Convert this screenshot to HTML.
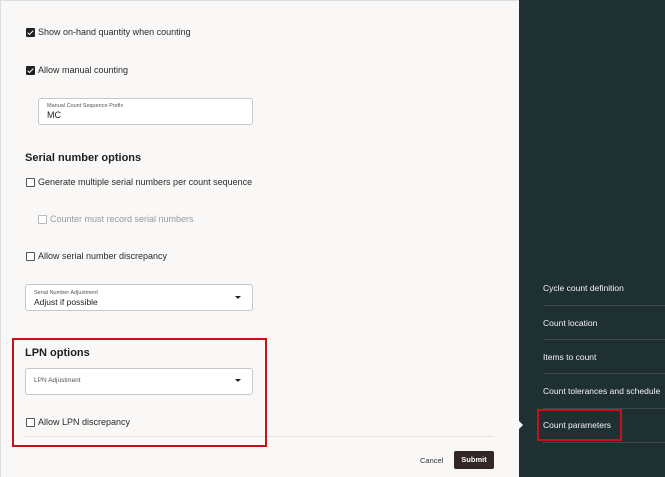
<!DOCTYPE html>
<html><head><style>
body{margin:0;width:665px;height:477px;overflow:hidden;background:#f9f8f6;font-family:"Liberation Sans",sans-serif;color:#222;position:relative}
.a{position:absolute}
.cb{position:absolute;box-sizing:border-box;width:9px;height:9px;border:1px solid #555;border-radius:1px;background:#fff}
.cb.on{background:#222;border-color:#222}
.cb.on:after{content:"";position:absolute;left:2px;top:0px;width:2px;height:5px;border:solid #fff;border-width:0 1.3px 1.3px 0;transform:rotate(45deg)}
.lbl{position:absolute;font-size:9px;color:#2a2a2a}
.field{position:absolute;background:#fff;border:1px solid #c9c7c3;border-radius:3px}
.h{position:absolute;font-size:11px;font-weight:bold;color:#1e1e1e}
.nav{position:absolute;left:543px;font-size:8.5px;color:#f2f2f2}
.dv{position:absolute;left:543px;width:122px;height:1px;background:#3a4a4c}
.caret{position:absolute;width:0;height:0;border-left:3px solid transparent;border-right:3px solid transparent;border-top:3px solid #222}
</style></head><body>
<div class="a" style="left:0;top:0;width:519px;height:1px;background:#ddd"></div>
<div class="a" style="left:0;top:0;width:1px;height:477px;background:#ddd"></div>

<div class="cb on" style="left:26px;top:28px"></div><div class="lbl" style="left:38px;top:27px">Show on-hand quantity when counting</div>
<div class="cb on" style="left:26px;top:66px"></div><div class="lbl" style="left:38px;top:65px">Allow manual counting</div>
<div class="field" style="left:38px;top:98px;width:213px;height:25px">
<div class="a" style="left:8px;top:4px;font-size:5.5px;color:#555">Manual Count Sequence Prefix</div>
<div class="a" style="left:8px;top:11px;font-size:9px;color:#222">MC</div></div>

<div class="h" style="left:25px;top:152px">Serial number options</div>
<div class="cb" style="left:26px;top:178px"></div><div class="lbl" style="left:38px;top:177px">Generate multiple serial numbers per count sequence</div>
<div class="cb" style="left:38px;top:215px;border-color:#bbb"></div><div class="lbl" style="left:50px;top:214px;color:#999">Counter must record serial numbers</div>
<div class="cb" style="left:26px;top:252px"></div><div class="lbl" style="left:38px;top:251px">Allow serial number discrepancy</div>
<div class="field" style="left:25px;top:284px;width:226px;height:25px">
<div class="a" style="left:8px;top:5px;font-size:5.5px;color:#555">Serial Number Adjustment</div>
<div class="a" style="left:8px;top:12px;font-size:8.5px;color:#222">Adjust if possible</div>
<div class="caret" style="left:209px;top:11px"></div></div>

<div class="h" style="left:25px;top:347px">LPN options</div>
<div class="field" style="left:25px;top:368px;width:226px;height:25px">
<div class="a" style="left:8px;top:8px;font-size:6.5px;color:#555">LPN Adjustment</div>
<div class="caret" style="left:209px;top:10px"></div></div>
<div class="cb" style="left:26px;top:418px"></div><div class="lbl" style="left:38px;top:417px">Allow LPN discrepancy</div>
<div class="a" style="left:25px;top:436px;width:469px;height:1px;background:#e6e4e0"></div>
<div class="a" style="left:12px;top:338px;width:251px;height:105px;border:2px solid #c8101a"></div>

<div class="a" style="left:420px;top:456px;font-size:7.5px;color:#333">Cancel</div>
<div class="a" style="left:454px;top:451px;width:40px;height:18px;background:#312826;border-radius:2px;color:#fff;font-size:7.5px;font-weight:bold;text-align:center;line-height:18px">Submit</div>

<div class="a" style="left:519px;top:0;width:146px;height:477px;background:#1f3033"></div>
<div class="a" style="left:519px;top:421px;width:0;height:0;border-top:4px solid transparent;border-bottom:4px solid transparent;border-left:4px solid #f9f8f6"></div>
<div class="nav" style="top:283px">Cycle count definition</div><div class="dv" style="top:305px"></div>
<div class="nav" style="top:318px">Count location</div><div class="dv" style="top:339px"></div>
<div class="nav" style="top:352px">Items to count</div><div class="dv" style="top:373px"></div>
<div class="nav" style="top:386px">Count tolerances and schedule</div><div class="dv" style="top:408px"></div>
<div class="nav" style="top:420px">Count parameters</div><div class="dv" style="top:442px"></div>
<div class="a" style="left:537px;top:409px;width:81px;height:28px;border:2px solid #c8101a"></div>
</body></html>
